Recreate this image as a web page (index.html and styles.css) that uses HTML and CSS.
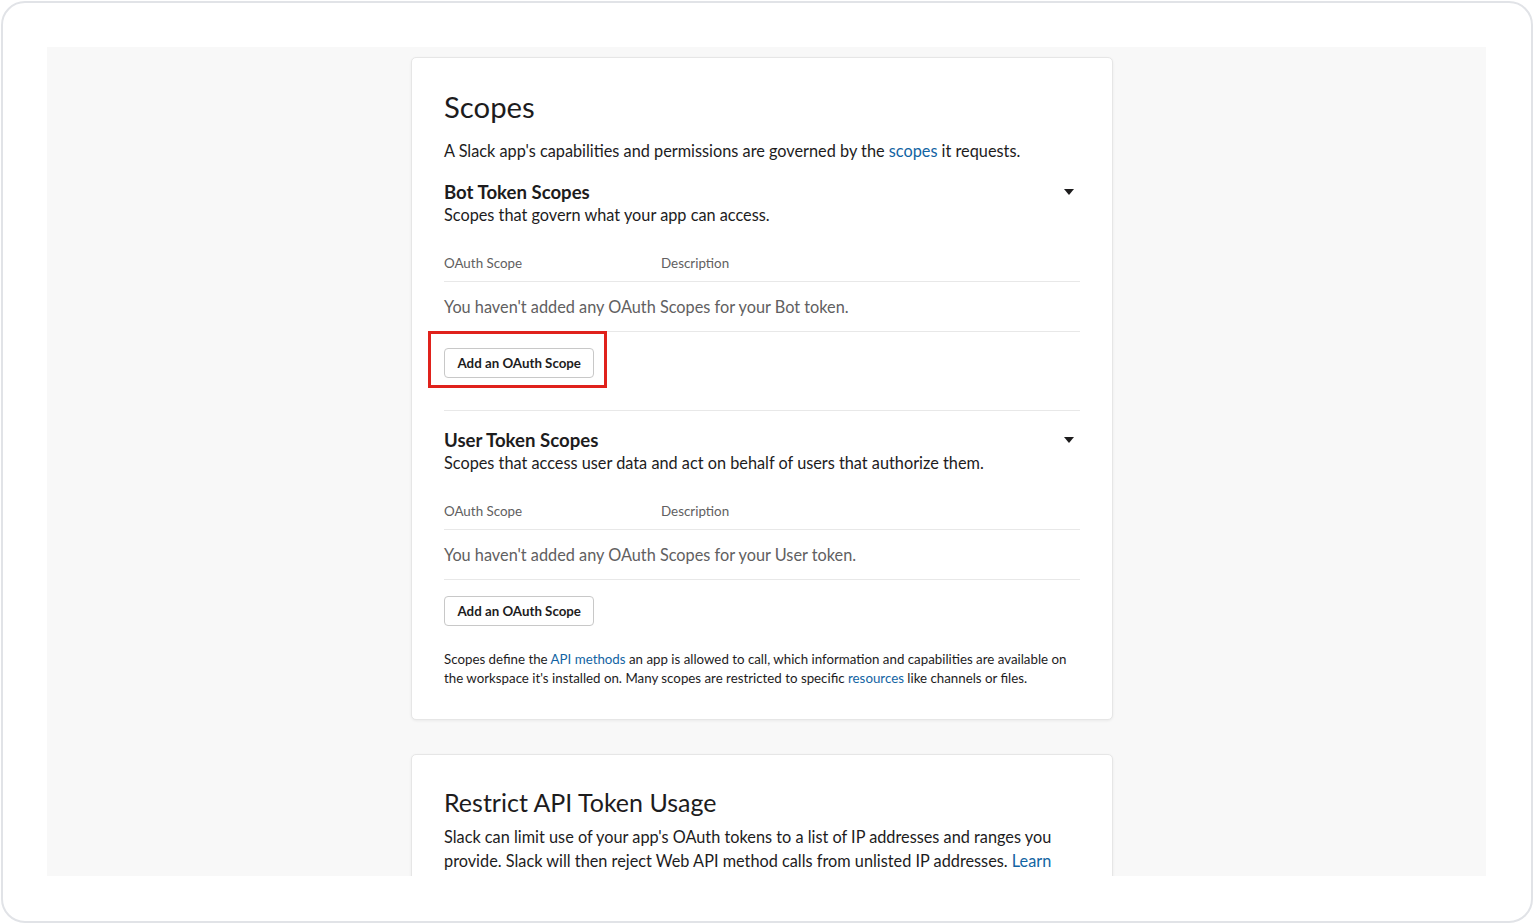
FILE: index.html
```html
<!DOCTYPE html>
<html lang="en">
<head>
<meta charset="utf-8">
<title>Scopes</title>
<link rel="stylesheet" href="styles.css">
</head>
<body>
<div class="frame">
  <div class="canvas">
    <section class="card">
      <h2 class="card-title">Scopes</h2>
      <p class="lead">A Slack app's capabilities and permissions are governed by the <a href="#">scopes</a> it requests.</p>

      <div class="group">
        <div class="group-head">
          <div>
            <h3 class="group-title">Bot Token Scopes</h3>
            <p class="group-sub">Scopes that govern what your app can access.</p>
          </div>
          <span class="caret"></span>
        </div>
        <div class="table-head">
          <span class="col-scope">OAuth Scope</span>
          <span class="col-desc">Description</span>
        </div>
        <div class="table-empty">You haven't added any OAuth Scopes for your Bot token.</div>
        <div class="btn-wrap">
          <button class="btn">Add an OAuth Scope</button>
          <span class="highlight"></span>
        </div>
      </div>

      <div class="group group-second">
        <div class="group-head">
          <div>
            <h3 class="group-title">User Token Scopes</h3>
            <p class="group-sub">Scopes that access user data and act on behalf of users that authorize them.</p>
          </div>
          <span class="caret"></span>
        </div>
        <div class="table-head">
          <span class="col-scope">OAuth Scope</span>
          <span class="col-desc">Description</span>
        </div>
        <div class="table-empty">You haven't added any OAuth Scopes for your User token.</div>
        <div class="btn-wrap">
          <button class="btn">Add an OAuth Scope</button>
        </div>
      </div>

      <p class="footnote">Scopes define the <a href="#">API methods</a> an app is allowed to call, which information and capabilities are available on the workspace it's installed on. Many scopes are restricted to specific <a href="#">resources</a> like channels or files.</p>
    </section>

    <section class="card card-second">
      <h2 class="card-title card-title-sm">Restrict API Token Usage</h2>
      <p class="body-text">Slack can limit use of your app's OAuth tokens to a list of IP addresses and ranges you provide. Slack will then reject Web API method calls from unlisted IP addresses. <a href="#">Learn more.</a></p>
      <p class="body-text">You can use a range of IP addresses by entering a CIDR block.</p>
    </section>
  </div>
</div>
</body>
</html>
```

FILE: styles.css
```css
* { box-sizing: border-box; }

html, body {
  margin: 0;
  padding: 0;
  background: #ffffff;
}

body {
  padding: 1px;
  font-family: Lato, "Open Sans", "Liberation Sans", sans-serif;
  color: #1d1c1d;
}

.frame {
  height: 922px;
  border: 2px solid #e1e3e7;
  border-radius: 24px;
  padding: 44px 45px 44px 44px;
  background: #ffffff;
}

.canvas {
  height: 829px;
  background: #f8f8f8;
  overflow: hidden;
  padding: 10px 0 0 364px;
}

.card {
  width: 702px;
  background: #ffffff;
  border: 1px solid #e6e6e6;
  border-radius: 5px;
  box-shadow: 0 1px 3px rgba(0, 0, 0, 0.06);
  padding: 31px 32px 31px 32px;
}

.card-second {
  margin-top: 34px;
}

a {
  color: #1264a3;
  text-decoration: none;
}

.card-title {
  margin: 0;
  font-size: 29.3px;
  line-height: 36px;
  font-weight: 400;
  color: #1d1c1d;
}

.card-title-sm {
  font-size: 25px;
  line-height: 32px;
}

.lead {
  margin: 15px 0 0;
  font-size: 16.3px;
  line-height: 22px;
}

.group {
  margin-top: 18px;
}

.group-second {
  margin-top: 32px;
  border-top: 1px solid #e8e8e8;
  padding-top: 17px;
}

.group-head {
  display: flex;
  justify-content: space-between;
  align-items: flex-start;
}

.group-title {
  margin: 0;
  font-size: 18.6px;
  line-height: 24px;
  font-weight: 700;
}

.group-sub {
  margin: 0;
  font-size: 16.3px;
  line-height: 22px;
}

.caret {
  flex: none;
  width: 0;
  height: 0;
  margin: 9px 6px 0 0;
  border-left: 5px solid transparent;
  border-right: 5px solid transparent;
  border-top: 6px solid #1d1c1d;
}

.table-head {
  display: flex;
  margin-top: 28px;
  padding-bottom: 9px;
  border-bottom: 1px solid #e8e8e8;
  font-size: 13.4px;
  line-height: 18px;
  color: #616061;
}

.col-scope {
  width: 217px;
}

.table-empty {
  padding: 14px 0 13px;
  border-bottom: 1px solid #e8e8e8;
  font-size: 16.3px;
  line-height: 22px;
  color: #616061;
}

.btn-wrap {
  position: relative;
  display: inline-block;
  margin-top: 16px;
  vertical-align: top;
}

.btn {
  display: block;
  height: 30px;
  padding: 0 12.5px;
  background: #ffffff;
  border: 1px solid #c8c8c8;
  border-radius: 4px;
  font-family: Lato, "Open Sans", "Liberation Sans", sans-serif;
  font-size: 13.3px;
  font-weight: 700;
  color: #1d1c1d;
  cursor: pointer;
}

.highlight {
  position: absolute;
  left: -16px;
  top: -17px;
  right: -13px;
  bottom: -10px;
  border: 3px solid #e0221c;
  pointer-events: none;
}

.footnote {
  margin: 24px 0 0;
  font-size: 13.3px;
  line-height: 19px;
  color: #1d1c1d;
}

.body-text {
  margin: 7px 0 0;
  font-size: 16.3px;
  line-height: 24px;
}
```
